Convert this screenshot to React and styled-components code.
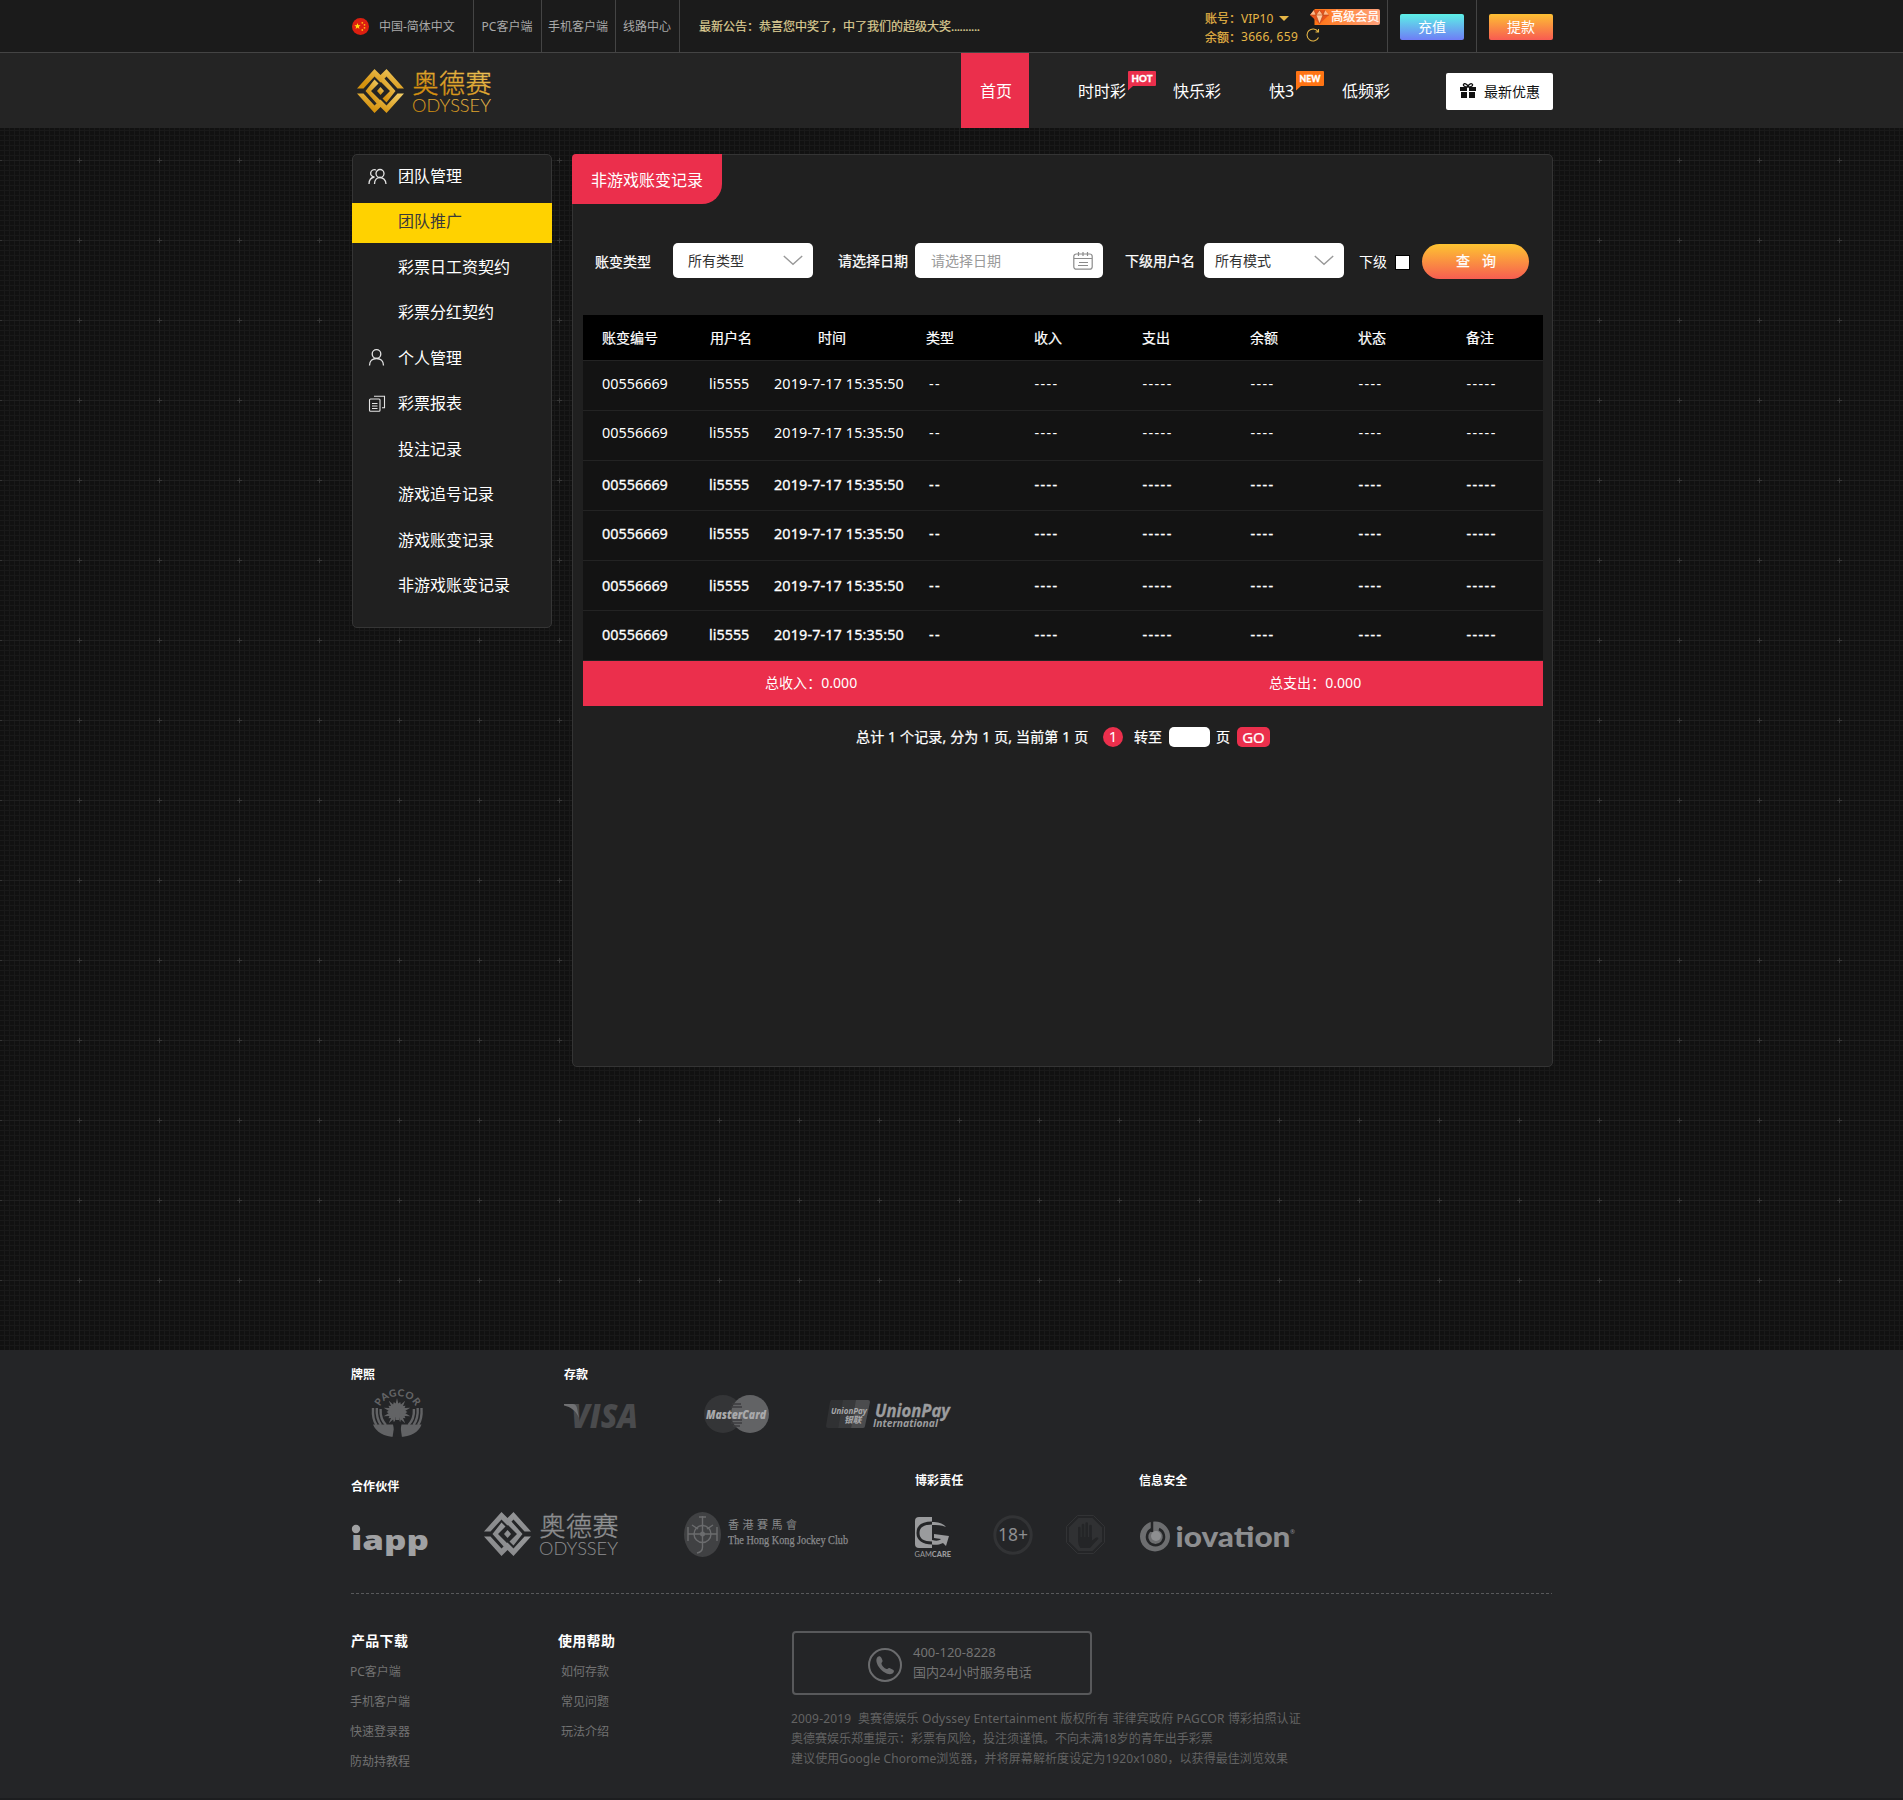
import React from "react";
import styled, { createGlobalStyle, css } from "styled-components";

const Global = createGlobalStyle`
  * { box-sizing: border-box; }
  body {
    margin: 0;
    background: #111;
    color: #fff;
    font-family: "Noto Sans", "Noto Sans CJK SC", sans-serif;
    font-size: 14px;
  }
  a { color: inherit; text-decoration: none; }
`;

const Page = styled.div`
  width: 1903px;
  height: 1800px;
  display: flex;
  flex-direction: column;
  overflow: hidden;
`;

/* ---------- top bar ---------- */

const TopBar = styled.header`
  height: 53px;
  padding-left: 352px;
  background: #1b1b1b;
  border-bottom: 1px solid #444;
  display: flex;
  font-size: 12px;
  color: #a9a9a9;
`;

const TopCell = styled.a`
  width: ${(p) => p.$w}px;
  padding-right: ${(p) => (p.$start ? 0 : 1)}px;
  border-right: 1px solid #444;
  display: flex;
  align-items: center;
  justify-content: ${(p) => (p.$start ? "flex-start" : "center")};
  gap: 10px;
  white-space: nowrap;
`;

const Notice = styled.div`
  width: 525px;
  padding: 1px 0 0 19px;
  line-height: 52px;
  color: #dccb92;
  -webkit-text-stroke: 0.2px #dccb92;
  white-space: nowrap;
`;

const Dots = styled.span`
  letter-spacing: -0.35px;
`;

const Account = styled.div`
  width: 183px;
  padding-top: 9px;
  border-right: 1px solid #444;
  color: #e6b646;
`;

const AccountLine = styled.div`
  height: ${(p) => p.$h}px;
  display: flex;
  align-items: center;
  white-space: nowrap;
`;

const AccountLabel = styled.span`
  width: 36px;
  -webkit-text-stroke: 0.2px #e6b646;
`;

const Caret = styled.span`
  margin-left: 6px;
  border: 5px solid transparent;
  border-top-color: #e6b646;
  border-bottom: 0;
`;

const Member = styled.span`
  margin: -3px 0 0 21px;
  width: 70px;
  height: 16px;
  display: flex;
  align-items: center;
  gap: 1px;
  border-radius: 2px;
  background: linear-gradient(90deg, #1b1b1b 4px, #ff7414 5px, #ffa27c);
  color: #fff;
  line-height: 15px;
  -webkit-text-stroke: 0.25px #fff;
`;

const ActionCell = styled.div`
  width: ${(p) => p.$w}px;
  border-right: ${(p) => (p.$last ? "0" : "1px solid #444")};
  padding: 14px 12px 0;
`;

const ActionButton = styled.button`
  display: block;
  width: 64px;
  height: 26px;
  padding: 0 0 2px;
  border: 0;
  border-radius: 2px;
  background: ${(p) => p.$bg};
  color: #fff;
  font: 14px/24px "Noto Sans CJK SC", sans-serif;
`;

/* ---------- navigation ---------- */

const NavBar = styled.nav`
  height: 75px;
  padding-left: 352px;
  background: #242424;
  display: flex;
  align-items: center;
`;

const Brand = styled.a`
  width: 609px;
  padding: 1px 0 0 5px;
  display: flex;
`;

const NavItem = styled.a`
  width: ${(p) => p.$w}px;
  height: 75px;
  line-height: 76px;
  padding-left: ${(p) => p.$pad || 0}px;
  background: ${(p) => (p.$active ? "#eb2f4c" : "transparent")};
  font-size: 16px;
  display: flex;
  white-space: nowrap;
`;

const FlagBadge = styled.svg`
  margin: 18px 0 0 ${(p) => p.$l}px;
  flex: none;
`;

const Promo = styled.a`
  width: 107px;
  height: 37px;
  margin-top: 2px;
  padding: 0 0 2px 14px;
  border-radius: 2px;
  background: #fff;
  color: #111;
  display: flex;
  align-items: center;
  gap: 8px;
`;

/* ---------- body ---------- */

const gridLine = (dir, color) =>
  `linear-gradient(${dir}, ${color} 1px, transparent 1px)`;

const Main = styled.main`
  position: relative;
  height: 1222px;
  padding: 26px 0 0 352px;
  display: flex;
  align-items: flex-start;
  gap: 20px;
  background-color: #111;
  background-image:
    ${gridLine("90deg", "#1f1f1f")},
    ${gridLine("180deg", "#1f1f1f")},
    ${gridLine("90deg", "#191919")},
    ${gridLine("180deg", "#191919")};
  background-size: 80px 80px, 80px 80px, 5px 5px, 5px 5px;
  background-position: 79px 0, 0 32px, 4px 0, 0 2px;
`;

const Crosses = styled.svg`
  position: absolute;
  inset: 0;
`;

const Sidebar = styled.aside`
  position: relative;
  width: 200px;
  height: 474px;
  border: 1px solid #353535;
  border-radius: 5px;
  background: #202020;
  display: flex;
  flex-direction: column;
`;

const SideItem = styled.a`
  height: ${(p) => p.$h}px;
  display: grid;
  grid-template-columns: 30px 1fr;
  padding: 0 0 ${(p) => p.$lift || 0}px 15px;
  align-items: center;
  font-size: 16px;
  line-height: 22px;
  white-space: nowrap;
  span { grid-column: 2; margin-top: ${(p) => (p.$drop ? 0 : -2)}px; }
  svg { display: block; margin-top: -2px; }
  ${(p) =>
    p.$active &&
    css`
      margin: 0 -1px;
      padding: 0 0 2px 16px;
      background: #ffd200;
      color: #3a3a3a;
    `}
`;

const Panel = styled.section`
  position: relative;
  width: 981px;
  height: 913px;
  border: 1px solid #343434;
  border-radius: 5px;
  background: #202020;
`;

const PanelTab = styled.h1`
  width: 150px;
  height: 50px;
  margin: -1px 0 0 -1px;
  padding: 1px 0 0 19px;
  border-radius: 4px 0 20px 0;
  background: #eb2f4c;
  font-size: 16px;
  font-weight: 400;
  line-height: 51px;
  white-space: nowrap;
`;

const Filters = styled.form`
  height: 35px;
  margin-top: 39px;
  padding-left: 22px;
  display: flex;
  align-items: center;
  white-space: nowrap;
`;

const Label = styled.label`
  width: ${(p) => p.$w}px;
  padding-bottom: ${(p) => p.$lift || 0}px;
  -webkit-text-stroke: ${(p) => (p.$thin ? 0 : 0.25)}px #fff;
`;

const Field = styled.div`
  width: ${(p) => p.$w}px;
  height: 35px;
  margin-right: ${(p) => p.$gap}px;
  padding: 0 ${(p) => p.$r}px 1px ${(p) => p.$l}px;
  border-radius: 5px;
  background: #fff;
  color: ${(p) => (p.$muted ? "#9a9a9a" : "#333")};
  display: flex;
  align-items: center;
  justify-content: space-between;
  svg { margin-top: 1px; }
`;

const Check = styled.span`
  width: 15px;
  height: 15px;
  margin: 3px 12px 0 0;
  border: 1px solid #000;
  background: #fff;
`;

const SearchButton = styled.button`
  width: 107px;
  height: 35px;
  margin-top: 2px;
  padding: 0 0 4px 1px;
  border: 0;
  border-radius: 18px;
  background: linear-gradient(#fdc431, #f75d51);
  color: #fff;
  font: 14px "Noto Sans CJK SC", sans-serif;
  word-spacing: 9px;
  -webkit-text-stroke: 0.25px #fff;
`;

const Table = styled.div`
  width: 960px;
  margin: 37px 0 0 10px;
  background: #131313;
`;

const Row = styled.div`
  height: 50px;
  padding: 0 0 ${(p) => p.$lift}px 19px;
  border-bottom: 1px solid #232323;
  display: grid;
  grid-template-columns: repeat(9, 108px);
  align-items: center;
  font-size: 14.4px;
  white-space: nowrap;
  -webkit-text-stroke: ${(p) => (p.$strong ? 0.3 : 0)}px #fff;
`;

const HeadRow = styled(Row)`
  height: 46px;
  background: #000;
  font-size: 14px;
  -webkit-text-stroke: 0.2px #fff;
`;

const Cell = styled.span`
  margin-left: ${(p) => p.$l || 0}px;
  letter-spacing: ${(p) => p.$ls || 0}px;
`;

const Totals = styled.div`
  height: 45px;
  padding: 0 0 4px 182px;
  background: #eb2f4c;
  display: grid;
  grid-template-columns: 504px 1fr;
  align-items: center;
  letter-spacing: 0.05px;
`;

const Pager = styled.div`
  height: 20px;
  margin-top: 21px;
  padding-left: 283px;
  display: flex;
  align-items: center;
  white-space: nowrap;
  -webkit-text-stroke: 0.25px #fff;
`;

const PagerText = styled.span`
  width: ${(p) => p.$w}px;
  margin-top: -2px;
  letter-spacing: ${(p) => p.$ls || 0}px;
`;

const PageDot = styled.span`
  width: 20px;
  height: 20px;
  margin-right: 11px;
  border-radius: 50%;
  background: #eb2f4c;
  font-size: 15px;
  line-height: 19px;
  text-align: center;
  -webkit-text-stroke: 0;
`;

const PageInput = styled.span`
  width: 41px;
  height: 20px;
  margin-right: 6px;
  border-radius: 5px;
  background: #fff;
`;

const GoButton = styled.button`
  width: 33px;
  height: 20px;
  padding: 0 0 1px;
  border: 0;
  border-radius: 5px;
  background: #eb2f4c;
  color: #fff;
  font: 15px/18px "Noto Sans", sans-serif;
  -webkit-text-stroke: 0.2px #fff;
`;

/* ---------- footer ---------- */

const Footer = styled.footer`
  height: 450px;
  padding: 17px 0 0 351px;
  background: #242527;
  border-bottom: 2px solid #1c1d1f;
`;

const FooterRow = styled.div`
  height: ${(p) => p.$h}px;
  display: flex;
`;

const LogoGroup = styled.div`
  width: ${(p) => p.$w}px;
  padding-top: ${(p) => p.$t || 0}px;
`;

const LogoTitle = styled.h2`
  height: 16px;
  margin: 0;
  font: bold 12px/14px "Noto Sans CJK SC", sans-serif;
  letter-spacing: 0.1px;
`;

const Logos = styled.div`
  display: flex;
  align-items: flex-start;
`;

const Mark = styled.svg`
  flex: none;
  overflow: visible;
  margin: ${(p) => p.$t || 0}px 0 0 ${(p) => p.$l || 0}px;
`;

const Divider = styled.div`
  width: 1201px;
  height: 1px;
  background: repeating-linear-gradient(90deg, #58595b 0 3px, transparent 3px 5px);
`;

const LinkColumn = styled.div`
  width: ${(p) => p.$w}px;
  padding-top: 37px;
  color: #727272;
  font-size: 12px;
`;

const LinkTitle = styled.h3`
  margin: -1px 0 7px;
  color: #fff;
  font: bold 14px/20px "Noto Sans CJK SC", sans-serif;
  letter-spacing: 0.3px;
`;

const FooterLink = styled.a`
  display: block;
  line-height: 30px;
  margin-left: ${(p) => p.$l}px;
`;

const Hotline = styled.div`
  width: 300px;
  height: 64px;
  padding: 0 0 2px 74px;
  border: 2px solid #58595b;
  border-radius: 4px;
  display: flex;
  align-items: center;
  gap: 11px;
  color: #747474;
  font-size: 13px;
  line-height: 20px;
  svg { margin-top: 5px; }
`;

const Copyright = styled.div`
  margin: 14px 0 0 -1px;
  color: #636363;
`;

const CopyLine = styled.p`
  margin: 0;
  line-height: 20px;
  white-space: pre;
  letter-spacing: ${(p) => p.$ls}px;
`;

/* ---------- drawings ---------- */

const OdysseyLogo = ({ gold, ...rest }) => {
  const id = gold ? "gold" : "grey";
  const a = gold ? "#f3d06a" : "#97989a";
  const b = gold ? "#d5920f" : "#8a8b8d";
  const paint = `url(#${id})`;
  return (
    <Mark width="135" height="45" viewBox="0 0 135 45" {...rest}>
      <defs>
        <linearGradient id={id} x1="1" y1="0" x2="0.3" y2="0.8">
          <stop offset="0" stopColor={a} />
          <stop offset="1" stopColor={b} />
        </linearGradient>
      </defs>
      <g fill={paint}>
        <path d="M17.5 0 23.5 6 29.5 0 47 19.5H40.5L29.5 7.5 23.5 13.5 17.5 7.5 6.5 19.5H0Z" />
        <path d="M0 24.5H6.5L17.5 36.5 23.5 30.5 29.5 36.5 40.5 24.5H47L29.5 44 23.5 38 17.5 44Z" />
        <path d="M17.5 10.5 21.5 14.5 14 22 24 32 20.5 35.5 8.5 22Z" />
        <path d="M29.5 33.5 25.5 29.5 33 22 23 12 26.5 8.5 38.5 22Z" />
        <path d="M23.5 18 27 22 23.5 26 20 22Z" />
      </g>
      <text x="55.5" y="24" fontSize="26" fontWeight="300" textLength="79" stroke={paint} strokeWidth=".35" fill={paint} fontFamily="Noto Sans CJK SC">奥德赛</text>
      <text x="55" y="43" fontSize="16.800" fontWeight="300" textLength="79" lengthAdjust="spacingAndGlyphs" fill={paint} fontFamily="Lato">ODYSSEY</text>
    </Mark>
  );
};

const CnFlag = () => (
  <svg width="17" height="17" viewBox="0 0 17 17">
    <circle cx="8.5" cy="8.5" r="8.5" fill="#dc1f10" />
    <path d="M5.5 5 6.3 7.2 8.6 7.3 6.8 8.7 7.4 10.9 5.5 9.6 3.6 10.9 4.2 8.7 2.4 7.3 4.7 7.2Z" fill="#ffe411" />
    <g fill="#ffb411">
      <circle cx="10.3" cy="4.8" r=".9" />
      <circle cx="12.5" cy="6.8" r=".9" />
      <circle cx="12.5" cy="9.8" r=".9" />
      <circle cx="10.3" cy="12" r=".9" />
    </g>
  </svg>
);

const Gem = () => (
  <svg width="20" height="16" viewBox="0 0 20 16">
    <path d="M4 1H15L19 6 9.5 15 0 6Z" fill="#e8531c" />
    <path d="M4 1 6 6 0 6ZM9.5 1 6 6H13ZM15 1 13 6H19Z" fill="#ffb98a" />
    <path d="M6 6 9.5 15 13 6Z" fill="#ffc9a0" />
    <path d="M0 6H19M6 6 9.5 15 13 6M4 1 6 6 9.5 1 13 6 15 1" stroke="#b8400f" strokeWidth=".6" fill="none" />
  </svg>
);

const Refresh = () => (
  <svg width="14" height="14" viewBox="0 0 14 14" fill="none" stroke="#e6b646" strokeWidth="1.1">
    <path d="M12 3.500A6 6 0 1 0 12.500 9.500M12.500 1V4H9.500" />
  </svg>
);

const Bubble = ({ text, color, l }) => (
  <FlagBadge $l={l} width="28" height="20" viewBox="0 0 28 20">
    <path d="M1 0H27Q28 0 28 1V14Q28 15 27 15H5L0 19.500V1Q0 0 1 0Z" fill={color} />
    <text x="14" y="11" textAnchor="middle" fontSize="9" fontWeight="900" textLength="21" lengthAdjust="spacingAndGlyphs" fill="#fff" stroke="#fff" strokeWidth=".3" fontFamily="Lato">{text}</text>
  </FlagBadge>
);

const Gift = () => (
  <svg width="16" height="15" viewBox="0 0 16 15" fill="#111">
    <path d="M0 4H7V8H0ZM9 4H16V8H9ZM1 9H7V15H1ZM9 9H15V15H9Z" />
    <path d="M7.500 4C5 4 3 3 3.500 1.500S7 .5 8 3.500C9 .5 12 0 12.500 1.500S11 4 8.500 4" fill="none" stroke="#111" strokeWidth="1.300" />
  </svg>
);

const TeamIcon = () => (
  <svg width="20" height="17" viewBox="0 0 20 17" fill="none" stroke="#e4e4e4" strokeWidth="1.300">
    <circle cx="12" cy="5.500" r="4" />
    <path d="M6.500 16C6.500 12 9 9.500 12 9.500S18 12 18 16" />
    <path d="M8 2A3.700 3.700 0 1 0 6.500 9C3.500 9.500 1 12 1 16" />
  </svg>
);

const UserIcon = () => (
  <svg width="20" height="17" viewBox="0 0 20 17" fill="none" stroke="#e4e4e4" strokeWidth="1.300">
    <circle cx="8.500" cy="5" r="4.300" />
    <path d="M1.500 16.500C1.500 12 4.500 9.500 8.500 9.500S15.500 12 15.500 16.500" />
  </svg>
);

const ReportIcon = () => (
  <svg width="20" height="19" viewBox="0 -2 20 19" fill="none" stroke="#e4e4e4" strokeWidth="1.100">
    <rect x="1.500" y="4" width="10.500" height="12.300" rx="1" />
    <path d="M6 1.200H16.500V12.800H14M4 8.500H9.500M4 11H9.500M4 13.500H9.500" />
  </svg>
);

const Chevron = () => (
  <svg width="20" height="11" viewBox="0 0 20 11" fill="none" stroke="#999" strokeWidth="1.400">
    <path d="M.8 1 10 9.300 19.200 1" />
  </svg>
);

const CalendarIcon = () => (
  <svg width="20" height="18" viewBox="0 0 20 18" fill="none" stroke="#8b8b8b" strokeWidth="1.200">
    <rect x=".8" y="2" width="18.400" height="15.200" rx="2.500" />
    <path d="M1 6.500H19M5.500 0V4M10 0V4M14.500 0V4M6 10.500H15M5 13.500H15" />
  </svg>
);

const sunburst = Array.from({ length: 40 }, (_, i) => {
  const r = i % 2 ? 8.5 : i % 4 ? 10.5 : 14;
  const a = (i * Math.PI) / 20 - Math.PI / 2;
  return `${(26 + r * Math.cos(a)).toFixed(1)},${(26 + r * Math.sin(a)).toFixed(1)}`;
}).join(" ");

const Pagcor = () => (
  <Mark $l="20" $t="3" width="53" height="52" viewBox="0 0 53 52" fill="#626365">
    <defs>
      <path id="arc" d="M9 20.500A19 16 0 0 1 44.500 20.500" />
    </defs>
    <text fontSize="10" fontWeight="900" fontFamily="Lato" textLength="43">
      <textPath href="#arc">PAGCOR</textPath>
    </text>
    <path d="M2 38.500H22L24.500 51C13 51 5 46 2 38.500ZM50.500 38.500H30.500L28 51C40 51 48 46 50.500 38.500Z" />
    <polygon points={sunburst} />
    <path d="M24.500 31H28L31 51.500H21.500Z" fill="#242527" />
    <path d="M24 27H28.500L28 34H24.500Z" />
    <g fill="none" stroke="#626365" strokeWidth="2.400">
      <path d="M2 22C1.500 30 2.500 35 5.500 39M5.800 22C5.300 30 7 35 10 39M9.600 23C9.200 30 11 35 15 39" />
      <path d="M50.500 22C51 30 50 35 47 39M46.700 22C47.200 30 45.500 35 42.500 39M42.900 23C43.300 30 41.500 35 37.500 39" />
    </g>
  </Mark>
);

const Visa = () => (
  <Mark $t="21" width="74" height="25" viewBox="0 0 74 25" fill="#4a4b4d">
    <text x="7" y="24" fontSize="33" fontWeight="800" fontStyle="italic" fontFamily="Open Sans" textLength="67" lengthAdjust="spacingAndGlyphs">VISA</text>
    <path d="M0 0H9C11 0 12 1 13 4L15 14C12 7 7 3 0 1.500Z" fill="#707173" />
  </Mark>
);

const MasterCard = () => (
  <Mark $l="66" $t="12" width="66" height="38" viewBox="0 0 66 38">
    <circle cx="19" cy="19" r="19" fill="#343537" />
    <circle cx="46" cy="19" r="19" fill="#626365" />
    <path d="M28 9H37M27 12H38M27 25H38M27 28H38M29 31H36" stroke="#3c3d3f" strokeWidth="1.300" />
    <text x="2" y="23.500" fontSize="13" fontWeight="800" fontStyle="italic" textLength="60" lengthAdjust="spacingAndGlyphs" fill="#a9a9ab" fontFamily="Open Sans">MasterCard</text>
  </Mark>
);

const UnionPay = () => (
  <Mark $l="56" $t="17" width="126" height="30" viewBox="0 0 126 30" fontFamily="Open Sans" fontStyle="italic" fontWeight="700">
    <path d="M5 0H18L12 28H2Q0 28 0 26L4 2Z" fill="#303133" />
    <path d="M17 0H31L25 28H12Z" fill="#38393b" />
    <path d="M30 0H42Q44 0 44 2L39 26Q39 28 37 28H25Z" fill="#4b4c4e" />
    <text x="5" y="13.500" fontSize="9.500" textLength="36" lengthAdjust="spacingAndGlyphs" fill="#a9a9ab">UnionPay</text>
    <text x="18" y="23" fontSize="8.800" fill="#a9a9ab" fontFamily="Noto Sans CJK SC">银联</text>
    <text x="49" y="17" fontSize="18" textLength="75" lengthAdjust="spacingAndGlyphs" fill="#9b9c9e" stroke="#9b9c9e" strokeWidth=".3">UnionPay</text>
    <text x="47" y="27" fontSize="11" textLength="65" lengthAdjust="spacingAndGlyphs" fill="#9b9c9e">International</text>
  </Mark>
);

const Iapp = () => (
  <Mark $t="30" width="78" height="32" viewBox="0 0 78 32" fill="#a0a1a3">
    <circle cx="5" cy="4" r="4.200" />
    <text x="0" y="24.500" fontSize="27" fontWeight="800" fontFamily="Open Sans" textLength="78" lengthAdjust="spacingAndGlyphs">ıapp</text>
  </Mark>
);

const JockeyClub = () => (
  <Mark $l="65" $t="17" width="166" height="46" viewBox="0 0 166 46">
    <ellipse cx="18.500" cy="22.500" rx="18.500" ry="22.500" fill="#404143" />
    <g fill="none" stroke="#6b6c6e" strokeWidth="1.400">
      <circle cx="18.500" cy="22" r="8.500" />
      <path d="M18.500 4V34M4 22H33M4 15V29M33 15V29M15 5H22M18.500 34Q19 40 13 41M8 13 14 17M29 13 23 17" />
    </g>
    <circle cx="18.500" cy="22" r="2.500" fill="#6b6c6e" />
    <text x="44" y="16.500" fontSize="11" textLength="69" fill="#8a8b8d" fontFamily="Noto Sans CJK TC">香港賽馬會</text>
    <text x="44" y="32" fontSize="12.500" textLength="120" lengthAdjust="spacingAndGlyphs" fill="#8a8b8d" stroke="#8a8b8d" strokeWidth=".25" fontFamily="Liberation Serif">The Hong Kong Jockey Club</text>
  </Mark>
);

const GamCare = () => (
  <Mark $t="28" width="37" height="41" viewBox="0 0 37 41">
    <path d="M4 0H17V31H4Q0 31 0 27V4Q0 0 4 0Z" fill="#9a9b9d" />
    <path d="M17 6C7 6 3 10 3 16S8 26 17 26" fill="none" stroke="#242527" strokeWidth="3" />
    <path d="M17 5C24 5 28 6.500 31 10C26 8 22 8 17 8ZM17 23C21 24 24 24 26 22L19 21V17L34 19 31 29 28 26C24 28 20 28 17 27.500Z" fill="#9a9b9d" />
    <text x="-.500" y="39.500" fontSize="8" fontFamily="Lato" textLength="36.500" lengthAdjust="spacingAndGlyphs" fill="#9a9b9d">GAM<tspan fontWeight="900">CARE</tspan></text>
  </Mark>
);

const Adults = () => (
  <Mark $l="41" $t="26" width="40" height="40" viewBox="0 0 40 40">
    <circle cx="20" cy="20" r="18.200" fill="none" stroke="#323335" strokeWidth="3" />
    <text x="5" y="26" fontSize="18" textLength="30" lengthAdjust="spacingAndGlyphs" fill="#8d8e90" fontFamily="Noto Sans">18+</text>
  </Mark>
);

const StopHand = () => (
  <Mark $l="33" $t="26" width="39" height="39" viewBox="0 0 39 39">
    <path d="M11.500.5H27.500L38.500 11.500V27.500L27.500 38.500H11.500L.5 27.500V11.500Z" fill="none" stroke="#323335" />
    <path d="M12.500 3H26.500L36 12.500V26.500L26.500 36H12.500L3 26.500V12.500Z" fill="#303133" />
    <g fill="none" stroke="#242527" strokeWidth="2.600" strokeLinecap="round">
      <path d="M13.300 13V24M17 10V24M20.700 8.500V24M24.500 11V24M25 28 31 23.500" />
    </g>
    <path d="M12 22H25.800V26L29.500 23.500 31 25 24 33H14.500Q12 30 12 26Z" fill="#242527" />
  </Mark>
);

const Iovation = () => (
  <Mark $t="32" width="157" height="32" viewBox="0 0 157 32" fill="#8d8e90">
    <circle cx="16" cy="15.500" r="15" fill="#6d6e70" />
    <path d="M13 0V11" stroke="#242527" strokeWidth="2.500" />
    <path d="M13 8A8.500 8.500 0 1 0 20 8" fill="none" stroke="#242527" strokeWidth="2.500" />
    <circle cx="17" cy="15" r="5" fill="#8d8e90" />
    <text x="36.500" y="26" fontSize="28" fontWeight="900" fontFamily="Lato" textLength="115" lengthAdjust="spacingAndGlyphs">iovation</text>
    <text x="151" y="13" fontSize="6">®</text>
  </Mark>
);

const PhoneIcon = () => (
  <svg width="34" height="34" viewBox="0 0 34 34">
    <circle cx="17" cy="17" r="16" fill="none" stroke="#6b6c6e" strokeWidth="2" />
    <path d="M9.500 9C11 7.500 12.500 8 13.500 10L14.500 12.500C15 14 13 14.500 13.500 16 14.500 18.500 16 20 18.500 21 20 21.300 20 19.500 21.500 20L25 21.800C27 23 25.500 25 24 25.800 20 27.500 14.500 23.500 12 20.500 9 17 7 12 9.500 9Z" fill="#6b6c6e" />
  </svg>
);

/* ---------- data ---------- */

const sideItems = [
  { text: "团队管理", icon: <TeamIcon />, h: 48, lift: 4 },
  { text: "团队推广", active: true, h: 40 },
  { text: "彩票日工资契约", h: 47, drop: true },
  { text: "彩票分红契约", h: 45 },
  { text: "个人管理", icon: <UserIcon />, h: 46, drop: true },
  { text: "彩票报表", icon: <ReportIcon />, h: 45 },
  { text: "投注记录", h: 46, drop: true },
  { text: "游戏追号记录", h: 45 },
  { text: "游戏账变记录", h: 46, drop: true },
  { text: "非游戏账变记录", h: 45 },
];

const columns = ["账变编号", "用户名", "时间", "类型", "收入", "支出", "余额", "状态", "备注"];
const dashes = ["--", "----", "-----", "----", "----", "-----"];
const rowLifts = [4, 6, 2, 4, 0, 2];

export default function App() {
  return (
    <Page>
      <Global />
      <TopBar>
        <TopCell $w={122} $start><CnFlag />中国-简体中文</TopCell>
        <TopCell $w={68}>PC客户端</TopCell>
        <TopCell $w={74}>手机客户端</TopCell>
        <TopCell $w={64}>线路中心</TopCell>
        <Notice>最新公告：恭喜您中奖了，中了我们的超级大奖<Dots>..........</Dots></Notice>
        <Account>
          <AccountLine $h={18}>
            <AccountLabel>账号：</AccountLabel>VIP10<Caret />
            <Member><Gem />高级会员</Member>
          </AccountLine>
          <AccountLine $h={19}>
            <AccountLabel>余额：</AccountLabel>
            <Cell $ls={0.3}>3666, 659</Cell>
            <Cell $l={8}><Refresh /></Cell>
          </AccountLine>
        </Account>
        <ActionCell $w={89}><ActionButton $bg="linear-gradient(#5cf0e6, #6f7df6)">充值</ActionButton></ActionCell>
        <ActionCell $w={89} $last><ActionButton $bg="linear-gradient(#fdc033, #f85b52)">提款</ActionButton></ActionCell>
      </TopBar>

      <NavBar>
        <Brand><OdysseyLogo gold /></Brand>
        <NavItem $w={68} $pad={19} $active>首页</NavItem>
        <NavItem $w={144} $pad={49}>时时彩<Bubble text="HOT" color="#eb2f4c" l={2} /></NavItem>
        <NavItem $w={96}>快乐彩</NavItem>
        <NavItem $w={73}>快3<Bubble text="NEW" color="#ff7414" l={2} /></NavItem>
        <NavItem $w={104}>低频彩</NavItem>
        <Promo><Gift />最新优惠</Promo>
      </NavBar>

      <Main>
        <Crosses width="1903" height="1222">
          <defs>
            <pattern id="cross" width="80" height="80" patternUnits="userSpaceOnUse" x="39" y="-8">
              <path d="M38 40.500H43M40.500 38V43" stroke="#363636" />
            </pattern>
          </defs>
          <rect width="1903" height="1222" fill="url(#cross)" />
        </Crosses>
        <Sidebar>
          {sideItems.map((item) => (
            <SideItem key={item.text} $h={item.h} $lift={item.lift} $drop={item.drop} $active={item.active}>
              {item.icon}
              <span>{item.text}</span>
            </SideItem>
          ))}
        </Sidebar>

        <Panel>
          <PanelTab>非游戏账变记录</PanelTab>
          <Filters>
            <Label $w={78}>账变类型</Label>
            <Field $w={140} $gap={25} $l={15} $r={10.5}>所有类型<Chevron /></Field>
            <Label $w={77} $lift={2}>请选择日期</Label>
            <Field $w={188} $gap={22} $l={16} $r={10} $muted>请选择日期<CalendarIcon /></Field>
            <Label $w={79} $lift={2}>下级用户名</Label>
            <Field $w={140} $gap={15} $l={11} $r={10.5}>所有模式<Chevron /></Field>
            <Label $w={36} $thin>下级</Label>
            <Check />
            <SearchButton type="button">查 询</SearchButton>
          </Filters>

          <Table>
            <HeadRow $lift={2}>
              {columns.map((name) => <Cell key={name}>{name}</Cell>)}
            </HeadRow>
            {rowLifts.map((lift, i) => (
              <Row key={i} $lift={lift} $strong={i > 1}>
                <Cell>00556669</Cell>
                <Cell $l={-1}>li5555</Cell>
                <Cell $l={-44} $ls={0.12}>2019-7-17 15:35:50</Cell>
                {dashes.map((d, k) => <Cell key={k} $ls={1.4} $l={k ? 0.5 : 3}>{d}</Cell>)}
              </Row>
            ))}
            <Totals>
              <span>总收入：0.000</span>
              <span>总支出：0.000</span>
            </Totals>
          </Table>

          <Pager>
            <PagerText $w={247} $ls={0.15}>总计 1 个记录, 分为 1 页, 当前第 1 页</PagerText>
            <PageDot>1</PageDot>
            <PagerText $w={35}>转至</PagerText>
            <PageInput />
            <PagerText $w={21}>页</PagerText>
            <GoButton>GO</GoButton>
          </Pager>
        </Panel>
      </Main>

      <Footer>
        <FooterRow $h={76}>
          <LogoGroup $w={213}>
            <LogoTitle>牌照</LogoTitle>
            <Logos><Pagcor /></Logos>
          </LogoGroup>
          <LogoGroup $w={400}>
            <LogoTitle>存款</LogoTitle>
            <Logos><Visa /><MasterCard /><UnionPay /></Logos>
          </LogoGroup>
        </FooterRow>
        <FooterRow $h={150}>
          <LogoGroup $w={564} $t={36}>
            <LogoTitle>合作伙伴</LogoTitle>
            <Logos><Iapp /><OdysseyLogo $l={55} $t={17} /><JockeyClub /></Logos>
          </LogoGroup>
          <LogoGroup $w={224} $t={30}>
            <LogoTitle>博彩责任</LogoTitle>
            <Logos><GamCare /><Adults /><StopHand /></Logos>
          </LogoGroup>
          <LogoGroup $w={200} $t={30}>
            <LogoTitle>信息安全</LogoTitle>
            <Logos><Iovation /></Logos>
          </LogoGroup>
        </FooterRow>
        <Divider />
        <FooterRow $h={200}>
          <LinkColumn $w={207}>
            <LinkTitle>产品下载</LinkTitle>
            <FooterLink $l={-1}>PC客户端</FooterLink>
            <FooterLink $l={-1}>手机客户端</FooterLink>
            <FooterLink $l={-1}>快速登录器</FooterLink>
            <FooterLink $l={-1}>防劫持教程</FooterLink>
          </LinkColumn>
          <LinkColumn $w={234}>
            <LinkTitle>使用帮助</LinkTitle>
            <FooterLink $l={3}>如何存款</FooterLink>
            <FooterLink $l={3}>常见问题</FooterLink>
            <FooterLink $l={3}>玩法介绍</FooterLink>
          </LinkColumn>
          <LinkColumn $w={600}>
            <Hotline>
              <PhoneIcon />
              <div>400-120-8228<br />国内24小时服务电话</div>
            </Hotline>
            <Copyright>
              <CopyLine $ls={0.17}>{"2009-2019  奥赛德娱乐 Odyssey Entertainment 版权所有 菲律宾政府 PAGCOR 博彩拍照认证"}</CopyLine>
              <CopyLine $ls={0}>奥德赛娱乐郑重提示：彩票有风险，投注须谨慎。不向未满18岁的青年出手彩票</CopyLine>
              <CopyLine $ls={0.08}>建议使用Google Chorome浏览器，并将屏幕解析度设定为1920x1080，以获得最佳浏览效果</CopyLine>
            </Copyright>
          </LinkColumn>
        </FooterRow>
      </Footer>
    </Page>
  );
}
